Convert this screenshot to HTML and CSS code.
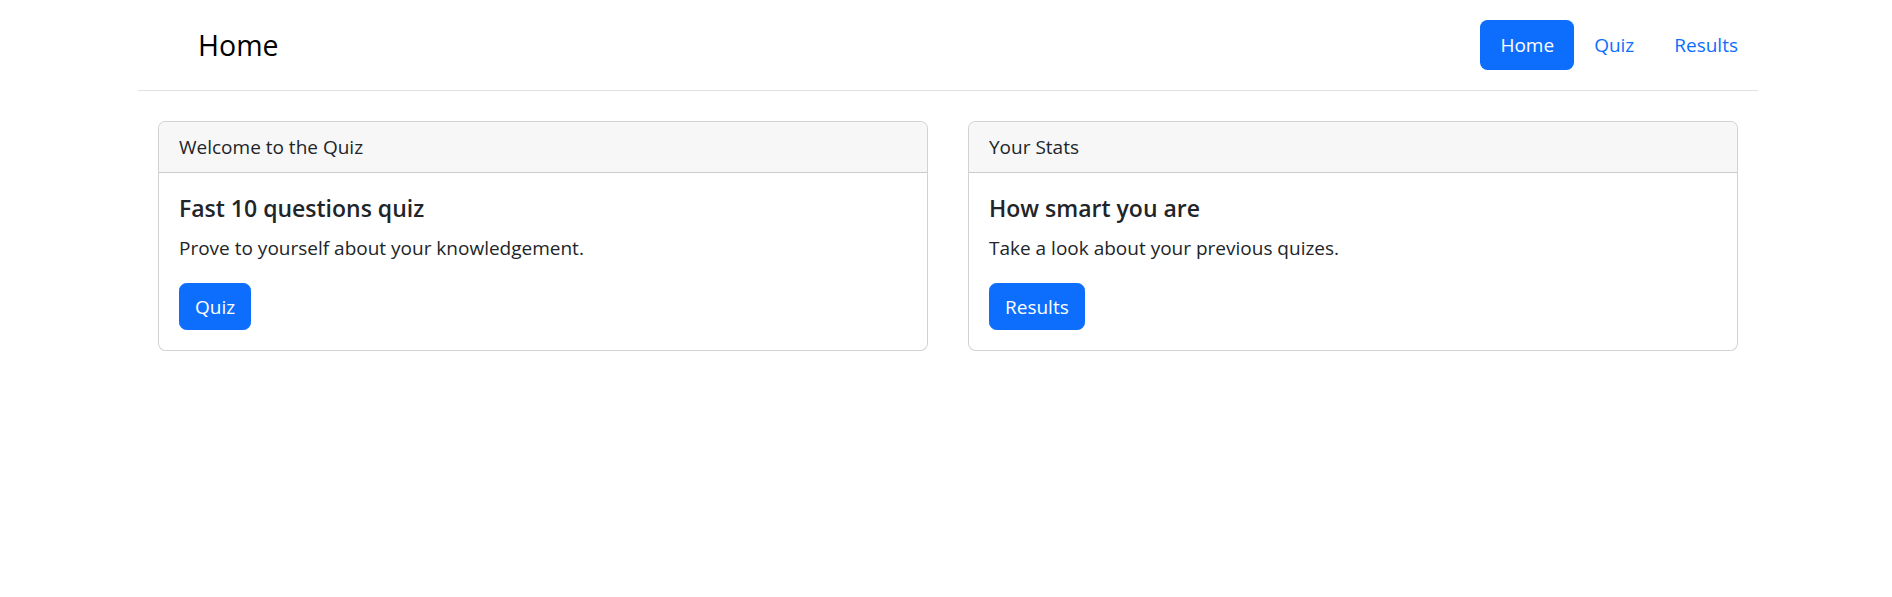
FILE: index.html
```html
<!DOCTYPE html>
<html lang="en">
<head>
<meta charset="utf-8">
<title>Home</title>
<link rel="stylesheet" href="styles.css">
</head>
<body>
<div class="container">
  <header class="site-header">
    <a href="#" class="brand">
      <svg class="brand-icon" width="50" height="40" viewBox="0 0 40 32"></svg>
      <span class="brand-text">Home</span>
    </a>
    <nav class="nav">
      <a href="#" class="nav-link active">Home</a>
      <a href="#" class="nav-link">Quiz</a>
      <a href="#" class="nav-link">Results</a>
    </nav>
  </header>
  <main class="cards">
    <section class="card">
      <div class="card-header">Welcome to the Quiz</div>
      <div class="card-body">
        <h5 class="card-title">Fast 10 questions quiz</h5>
        <p class="card-text">Prove to yourself about your knowledgement.</p>
        <a href="#" class="btn">Quiz</a>
      </div>
    </section>
    <section class="card">
      <div class="card-header">Your Stats</div>
      <div class="card-body">
        <h5 class="card-title">How smart you are</h5>
        <p class="card-text">Take a look about your previous quizes.</p>
        <a href="#" class="btn">Results</a>
      </div>
    </section>
  </main>
</div>
</body>
</html>
```

FILE: styles.css
```css
* { box-sizing: border-box; }

html, body {
  margin: 0;
  background: #fff;
}

body {
  padding-left: 4px;
  font-family: "Open Sans", "Noto Sans", sans-serif;
  font-size: 19px;
  line-height: 30px;
  color: #212529;
}

.container {
  width: 1650px;
  margin: 0 auto;
  padding: 0 15px;
}

.site-header {
  display: flex;
  align-items: center;
  padding: 20px 0;
  margin-bottom: 30px;
  border-bottom: 1px solid #dee2e6;
}

.brand {
  display: flex;
  align-items: center;
  margin-right: auto;
  color: #000;
  text-decoration: none;
}

.brand-icon {
  margin-right: 10px;
}

.brand-text {
  font-size: 28.5px;
  line-height: 45px;
}

.nav {
  display: flex;
}

.nav-link {
  display: block;
  padding: 10px 20px;
  color: #0d6efd;
  text-decoration: none;
  border-radius: 7.5px;
  line-height: 30px;
}

.nav-link.active {
  background: #0d6efd;
  color: #fff;
}

.cards {
  display: grid;
  grid-template-columns: 1fr 1fr;
  gap: 40px;
  padding: 0 20px;
}

.card {
  border: 1px solid rgba(0, 0, 0, 0.175);
  border-radius: 7.5px;
  overflow: hidden;
  background: #fff;
}

.card-header {
  padding: 10px 20px;
  background: #f7f7f7;
  border-bottom: 1px solid rgba(0, 0, 0, 0.175);
  line-height: 30px;
}

.card-body {
  padding: 20px;
}

.card-title {
  margin: 0 0 10px;
  font-size: 23px;
  font-weight: 600;
  line-height: 30px;
}

.card-text {
  margin: 0 0 20px;
  line-height: 30px;
}

.btn {
  display: inline-block;
  padding: 7.5px 15px;
  border: 1px solid #0d6efd;
  border-radius: 7.5px;
  background: #0d6efd;
  color: #fff;
  text-decoration: none;
  line-height: 30px;
}
```
